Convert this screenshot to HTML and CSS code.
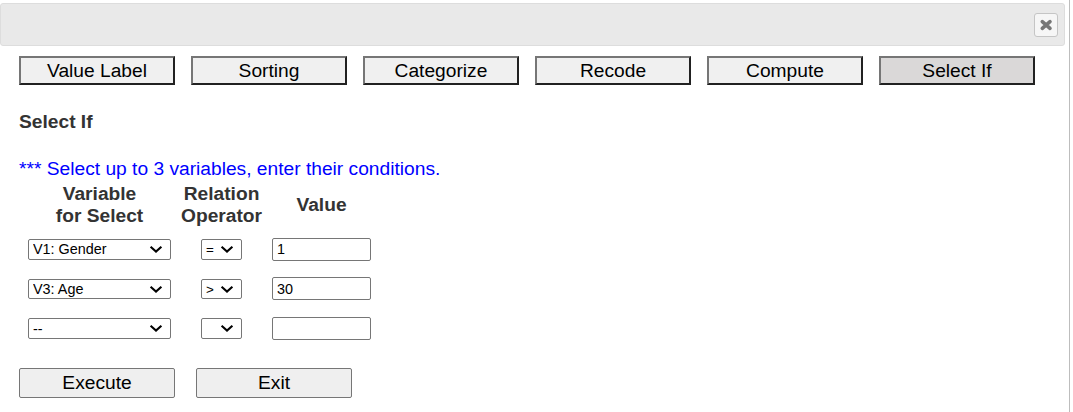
FILE: index.html
```html
<!DOCTYPE html>
<html lang="en">
<head>
<meta charset="utf-8">
<title>Select If</title>
<link rel="stylesheet" href="styles.css">
</head>
<body>
<div class="dialog">
  <header class="titlebar">
    <button class="close" aria-label="Close"><svg width="14" height="14" viewBox="0 0 14 14"><path d="M3.3 3.6L11 10.4M11 3.6L3.3 10.4"/></svg></button>
  </header>
  <main class="content">
    <nav class="tabs">
      <button class="tab">Value Label</button>
      <button class="tab">Sorting</button>
      <button class="tab">Categorize</button>
      <button class="tab">Recode</button>
      <button class="tab">Compute</button>
      <button class="tab active">Select If</button>
    </nav>
    <h1 class="heading">Select If</h1>
    <p class="hint">*** Select up to 3 variables, enter their conditions.</p>
    <div class="row head">
      <div>Variable<br>for Select</div><div>Relation<br>Operator</div><div>Value</div>
    </div>
    <div class="row">
      <div class="picker"><select class="field"><option>V1: Gender</option></select><svg class="arrow" viewBox="0 0 14 9"><path d="M1.6 1.8L7 6.6L12.4 1.8"/></svg></div>
      <div class="picker"><select class="field operator"><option>=</option></select><svg class="arrow" viewBox="0 0 14 9"><path d="M1.6 1.8L7 6.6L12.4 1.8"/></svg></div>
      <input class="field value" value="1">
    </div>
    <div class="row second">
      <div class="picker"><select class="field"><option>V3: Age</option></select><svg class="arrow" viewBox="0 0 14 9"><path d="M1.6 1.8L7 6.6L12.4 1.8"/></svg></div>
      <div class="picker"><select class="field operator"><option>&gt;</option></select><svg class="arrow" viewBox="0 0 14 9"><path d="M1.6 1.8L7 6.6L12.4 1.8"/></svg></div>
      <input class="field value" value="30">
    </div>
    <div class="row third">
      <div class="picker"><select class="field"><option>--</option></select><svg class="arrow" viewBox="0 0 14 9"><path d="M1.6 1.8L7 6.6L12.4 1.8"/></svg></div>
      <div class="picker"><select class="field operator"><option></option></select><svg class="arrow" viewBox="0 0 14 9"><path d="M1.6 1.8L7 6.6L12.4 1.8"/></svg></div>
      <input class="field value" value="">
    </div>
    <div class="actions">
      <button class="action">Execute</button>
      <button class="action">Exit</button>
    </div>
  </main>
</div>
</body>
</html>
```
FILE: styles.css
```css
* { box-sizing: border-box; }
body { margin: 0; background: #fff; overflow: hidden; }
.dialog {
  width: 1070px; height: 412px; padding: 3px 4px 0 0;
  border-right: 1px solid #bdbdbd;
  font-family: "Liberation Sans", Arial, sans-serif;
  font-size: 19.2px; line-height: 22px; color: #333;
}
.titlebar {
  height: 43px; display: flex; align-items: center; justify-content: flex-end;
  padding-right: 6px; background: #e9e9e9; border: 1px solid #ddd; border-radius: 3px;
}
.close {
  width: 24px; height: 24px; padding: 0; display: flex; align-items: center; justify-content: center;
  background: #f6f6f6; border: 1px solid #c5c5c5; border-radius: 3px;
}
.close path { stroke: #777; stroke-width: 3.6; stroke-linecap: round; fill: none; }
.content { padding: 10px 0 0 19px; }
.tabs { display: flex; gap: 16px; }
.tab {
  width: 156px; height: 29px; padding: 0; font: inherit; color: #000;
  background: #f0f0f0; border: 2px solid; border-color: #767676 #212121 #212121 #767676;
}
.active { background: #dad8d8; }
.heading { margin: 26px 0 0; font-size: 19.2px; line-height: 22px; }
.hint { margin: 25px 0 0; color: #00f; line-height: 22px; }
.row {
  display: grid; grid-template-columns: 143px 41px 99px; column-gap: 30px;
  align-items: center; height: 23px; margin: 0 0 16px 9px;
}
.head {
  height: 44px; margin: 3px 0 11px 9px; font-weight: bold;
  text-align: center; justify-items: center;
}
.second { margin-bottom: 17px; }
.picker { position: relative; display: flex; }
.arrow {
  position: absolute; right: 8px; top: 6px; width: 14px; height: 9px;
  pointer-events: none;
}
.arrow path { fill: none; stroke: #000; stroke-width: 2.1; }
.field {
  width: 100%; height: 21px; margin: 0; padding: 0 4px 1px;
  border: 1px solid #767676; border-radius: 2px; background: #fff; color: #000;
  font: 14.4px "Liberation Sans", Arial, sans-serif; appearance: none;
}
.operator { font-size: 13.4px; }
.second select { height: 20px; }
.value { height: 23px; padding: 0 4px 1px; }
.second .field, .third .field { padding-top: 1px; padding-bottom: 0; }
.actions { display: flex; gap: 21px; margin-top: 28px; }
.action {
  width: 156px; height: 30px; padding: 0 0 1px; font: inherit; color: #000;
  background: #efefef; border: 1px solid #767676; border-radius: 2px;
}
```
